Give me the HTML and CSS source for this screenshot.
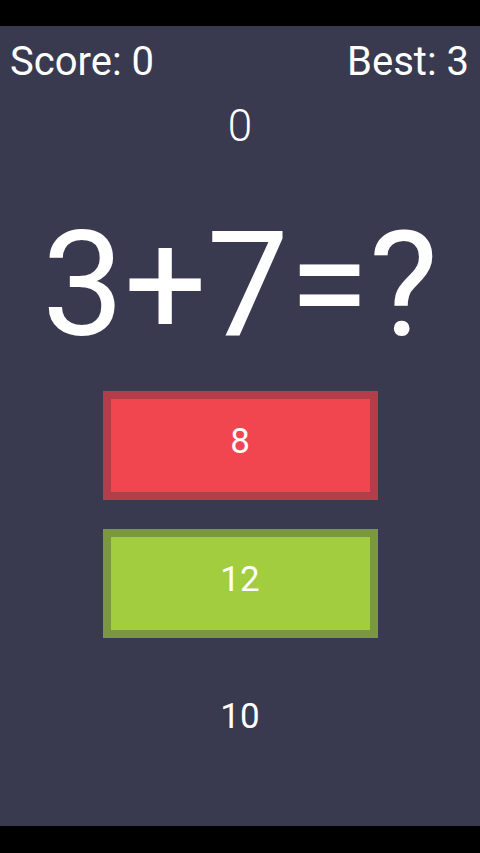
FILE: index.html
```html
<!DOCTYPE html>
<html>
<head>
<meta charset="utf-8">
<link rel="stylesheet" href="styles.css">
</head>
<body>
<div class="statusbar"></div>
<main class="game">
  <div class="scores">
    <span class="score">Score: 0</span>
    <span class="best">Best: 3</span>
  </div>
  <div class="timer">0</div>
  <div class="question">3+7=?</div>
  <div class="answers">
    <div class="answer red">8</div>
    <div class="answer green">12</div>
    <div class="answer plain">10</div>
  </div>
</main>
<div class="navbar"></div>
</body>
</html>
```
FILE: styles.css
```css
* { box-sizing: border-box; }
html, body { margin: 0; padding: 0; }
body {
  width: 480px;
  height: 853px;
  background: #000;
  font-family: Roboto, "Noto Sans", sans-serif;
  color: #fff;
  overflow: hidden;
  display: flex;
  flex-direction: column;
}
.statusbar { height: 26px; background: #000; flex: none; }
.navbar { height: 27px; background: #000; flex: none; }
.game {
  height: 800px;
  background: #393a4f;
  display: flex;
  flex-direction: column;
  align-items: center;
  flex: none;
}
.scores {
  width: 100%;
  display: flex;
  justify-content: space-between;
  padding: 12px 11px 0 10px;
  font-size: 40px;
  line-height: 48px;
}
.timer {
  margin-top: 15px;
  font-size: 44px;
  line-height: 50px;
  font-weight: 300;
}
.question {
  margin-top: 50px;
  font-size: 146px;
  line-height: 170px;
}
.answers {
  margin-top: 20px;
  display: flex;
  flex-direction: column;
  align-items: center;
  gap: 29px;
}
.answer {
  width: 275px;
  height: 109px;
  display: flex;
  align-items: center;
  justify-content: center;
  font-size: 35px;
  padding-bottom: 8px;
}
.red { background: #f1464f; border: 8px solid #b43d4c; }
.green { background: #a2cd3e; border: 8px solid #7b9841; }
.plain { background: transparent; height: 99px; padding-bottom: 0; }
```
